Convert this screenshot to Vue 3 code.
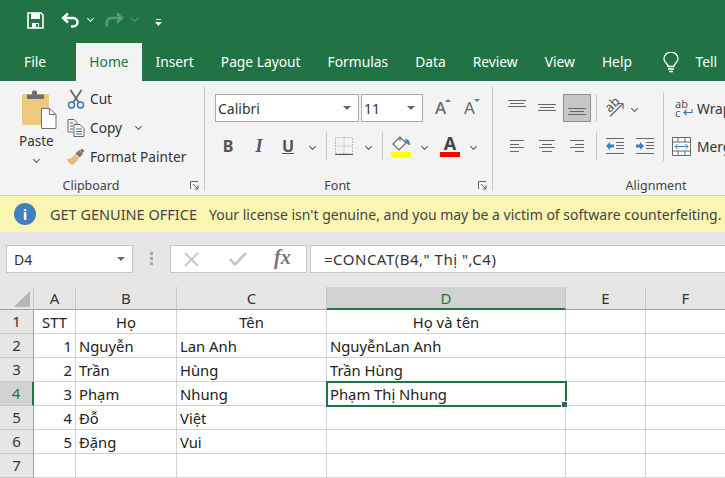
<script setup>
const tabs = ['File', 'Home', 'Insert', 'Page Layout', 'Formulas', 'Data', 'Review', 'View', 'Help']
const columns = ['A', 'B', 'C', 'D', 'E', 'F']

// Cada fila: numero, STT, Ho, Ten, Ho va ten
const rows = [
  { n: 1, a: 'STT', b: 'Họ', c: 'Tên', d: 'Họ và tên', header: true },
  { n: 2, a: '1', b: 'Nguyễn', c: 'Lan Anh', d: 'NguyễnLan Anh' },
  { n: 3, a: '2', b: 'Trần', c: 'Hùng', d: 'Trần Hùng' },
  { n: 4, a: '3', b: 'Phạm', c: 'Nhung', d: 'Phạm Thị Nhung', active: true },
  { n: 5, a: '4', b: 'Đỗ', c: 'Việt', d: '' },
  { n: 6, a: '5', b: 'Đặng', c: 'Vui', d: '' },
  { n: 7, a: '', b: '', c: '', d: '' }
]
</script>

<template>
  <div class="excel">
    <div class="titlebar">
      <svg class="qat-save" width="17" height="17" viewBox="0 0 17 17">
        <path d="M1 1h13l2 2v13H1z" fill="none" stroke="#fff" stroke-width="1.6" />
        <path d="M4 1h9v6H4z" fill="#fff" />
        <path d="M5 11h7v5H5z" fill="#fff" />
        <path d="M9 12h2v3H9z" fill="#217346" />
      </svg>
      <svg class="qat-undo" width="19" height="16" viewBox="0 0 19 16">
        <path d="M7 1.500 2 6l5 4.500M2.500 6H12c6 0 6 8.500 0 8.500H10" fill="none" stroke="#fff" stroke-width="2.400" />
      </svg>
      <span class="chev white qat-chev"></span>
      <svg class="qat-redo" width="19" height="16" viewBox="0 0 19 16">
        <path d="M12 1.500 17 6l-5 4.500M16.500 6H7c-5 0-6 3.500-5 8.500" fill="none" stroke="#5c9c7c" stroke-width="2.400" />
      </svg>
      <span class="chev dim qat-chev2"></span>
      <svg class="qat-more" width="7" height="9" viewBox="0 0 7 9">
        <path d="M1 1h5v1H1z" fill="#fff" />
        <path d="M0 4h7L3.500 8z" fill="#fff" />
      </svg>
    </div>

    <div class="tabs">
      <span v-for="t in tabs" :key="t" class="tab" :class="{ on: t === 'Home', first: t === 'File' }">{{ t }}</span>
      <svg class="bulb" width="16" height="21" viewBox="0 0 16 21">
        <path d="M5 14.500c0-3-4-4-4-7.500a7 7 0 0 1 14 0c0 3.500-4 4.500-4 7.500z" fill="none" stroke="#fff" stroke-width="1.300" />
        <path d="M5 17h6M6 19.500h4" stroke="#fff" stroke-width="1.300" />
      </svg>
      <span class="tab tell">Tell</span>
    </div>

    <div class="ribbon">
      <section class="group clipboard">
        <div class="group-body clip-body">
          <div class="paste">
            <svg width="35" height="39" viewBox="0 0 35 39">
              <rect x="0" y="4" width="27" height="31" rx="2" fill="#edc87e" />
              <path d="M5 9V4.500h5V2a1.500 1.500 0 0 1 1.500-1.500h2A1.500 1.500 0 0 1 15 2v2.500h7V9z" fill="#6f6f6f" />
              <path d="M19.500 18.500h8l6.500 6V38.500H19.500z" fill="#fff" stroke="#6f6f6f" />
              <path d="M27.500 18.500v6H34" fill="none" stroke="#6f6f6f" />
            </svg>
            <span class="paste-label">Paste</span>
            <span class="chev"></span>
          </div>
          <div class="tools">
            <div class="tool">
              <svg width="17" height="20" viewBox="0 0 17 20">
                <path d="M3 1l8 12M14 1 6 13" stroke="#666" stroke-width="1.800" fill="none" />
                <circle cx="4" cy="16" r="3" fill="none" stroke="#2f74b8" stroke-width="1.400" />
                <circle cx="13" cy="16" r="3" fill="none" stroke="#2f74b8" stroke-width="1.400" />
              </svg>
              <span>Cut</span>
            </div>
            <div class="tool">
              <svg width="17" height="18" viewBox="0 0 17 18">
                <path d="M.5.500h6l3 3v3M.5.500V13h5" fill="none" stroke="#666" />
                <path d="M6.500 5.500h6l4 4v8h-10z" fill="#fff" stroke="#666" />
                <path d="M2.500 4h3M2.500 7h3M2.500 10h3" stroke="#666" />
                <path d="M8.500 10h6M8.500 12.500h6M8.500 15h6" stroke="#2f74b8" />
              </svg>
              <span>Copy</span>
              <span class="chev copy-chev"></span>
            </div>
            <div class="tool">
              <svg width="18" height="17" viewBox="0 0 18 17">
                <path d="M0 11c3 0 6-2 8-5l4 4c-2 3-4 6-7 7-2-.500-4-3-5-6z" fill="#e6bd76" />
                <path d="M8.500 5.500 12 2l4 4-3.500 3.500z" fill="#777" />
                <path d="M13 2.500 15 .500l2.500 2.500-2 2z" fill="#777" />
              </svg>
              <span>Format Painter</span>
            </div>
          </div>
        </div>
        <div class="group-label">
          Clipboard
          <svg class="launcher" width="9" height="9" viewBox="0 0 9 9">
            <path d="M.5 8V.5H8M3 3l5 5M8 4.500V8H4.500" fill="none" stroke="#666" />
          </svg>
        </div>
      </section>

      <section class="group font">
        <div class="group-body">
          <div class="font-row first-row">
            <div class="select name"><span>Calibri</span><i class="caret"></i></div>
            <div class="select size"><span>11</span><i class="caret"></i></div>
            <span class="btn grow">A<i class="mark up"></i></span>
            <span class="btn shrink">A<i class="mark down"></i></span>
          </div>
          <div class="font-row second-row">
            <span class="fmt w26 bold">B</span>
            <span class="fmt w28 ital">I</span>
            <span class="fmt w30 under">U</span>
            <span class="chev-box"><span class="chev"></span></span>
            <span class="sep"></span>
            <span class="fmt w26">
              <svg width="18" height="18" viewBox="0 0 18 18">
                <path d="M.5.500h17v16H.5zM9 .500v16M.5 9h17" fill="none" stroke="#888" stroke-dasharray="1 2" />
                <path d="M0 17.500h18" stroke="#555" />
              </svg>
            </span>
            <span class="chev-box gap2"><span class="chev"></span></span>
            <span class="sep"></span>
            <span class="fmt w28 color-btn">
              <svg width="20" height="15" viewBox="0 0 20 15">
                <path d="M9 1 2 8l6 6 7-7z" fill="#fff" stroke="#666" stroke-width="1.200" />
                <path d="M9 1V5" stroke="#666" stroke-width="1.200" />
                <path d="M14 3c3 0 5 2 5 6-2 0-3-1-4-3z" fill="#3f7fbd" />
              </svg>
              <i class="bar yellow"></i>
            </span>
            <span class="chev-box"><span class="chev"></span></span>
            <span class="fmt w28 color-btn letter">
              <b>A</b>
              <i class="bar red"></i>
            </span>
            <span class="chev-box"><span class="chev"></span></span>
          </div>
        </div>
        <div class="group-label">
          Font
          <svg class="launcher" width="9" height="9" viewBox="0 0 9 9">
            <path d="M.5 8V.5H8M3 3l5 5M8 4.500V8H4.500" fill="none" stroke="#666" />
          </svg>
        </div>
      </section>

      <section class="group alignment">
        <div class="group-body">
          <div class="font-row first-row">
            <span class="align"><svg width="18" height="18" viewBox="0 0 18 18"><path d="M0 1.500h18M2 4.500h14M0 7.500h18" stroke="#666" /></svg></span>
            <span class="align"><svg width="18" height="18" viewBox="0 0 18 18"><path d="M0 5.500h18M2 8.500h14M0 11.500h18" stroke="#666" /></svg></span>
            <span class="align selected"><svg width="18" height="18" viewBox="0 0 18 18"><path d="M0 9.500h18M2 12.500h14M0 15.500h18" stroke="#666" /></svg></span>
            <span class="sep tall"></span>
            <span class="orient">
              <span class="orient-text">ab</span>
              <svg width="20" height="20" viewBox="0 0 20 20">
                <path d="M6 18.500 18.500 6M13.500 5.500h5.500V11" fill="none" stroke="#666" stroke-width="1.200" />
              </svg>
            </span>
            <span class="chev-box"><span class="chev"></span></span>
            <span class="sep long"></span>
            <span class="wrap-icon">
              <span class="wrap-letters">ab<br />c</span>
              <svg class="wrap-arrow" width="10" height="8" viewBox="0 0 10 8">
                <path d="M9 0v3.500H1.500M3.500 1 1 3.500 3.500 6" fill="none" stroke="#2f74b8" stroke-width="1.100" />
              </svg>
            </span>
            <span class="wrap-text">Wrap Text</span>
          </div>
          <div class="font-row second-row">
            <span class="align"><svg width="18" height="16" viewBox="0 0 18 16"><path d="M2 2.500h14M2 6.500h9M2 9.500h14M2 13.500h9" stroke="#666" /></svg></span>
            <span class="align"><svg width="18" height="16" viewBox="0 0 18 16"><path d="M1 2.500h16M4 6.500h10M1 9.500h16M4 13.500h10" stroke="#666" /></svg></span>
            <span class="align"><svg width="18" height="16" viewBox="0 0 18 16"><path d="M2 2.500h14M7 6.500h9M2 9.500h14M7 13.500h9" stroke="#666" /></svg></span>
            <span class="sep tall"></span>
            <span class="indent">
              <svg width="18" height="16" viewBox="0 0 18 16">
                <path d="M0 .500h18M10 4.500h8M10 7.500h8M10 10.500h8M0 15.500h18" stroke="#666" />
                <path d="M0 8l4-4v2.500h4v3H4V12z" fill="#3f7fbd" />
              </svg>
            </span>
            <span class="indent">
              <svg width="18" height="16" viewBox="0 0 18 16">
                <path d="M0 .500h18M10 4.500h8M10 7.500h8M10 10.500h8M0 15.500h18" stroke="#666" />
                <path d="M8 8 4 4v2.500H0v3h4V12z" fill="#3f7fbd" />
              </svg>
            </span>
            <span class="merge-icon">
              <svg width="19" height="19" viewBox="0 0 19 19">
                <path d="M.5.500h18v18H.5zM.5 5h18M.5 14h18M6 .500V5M13 .500V5M6 14v4.500M13 14v4.500" fill="#fff" stroke="#666" />
                <path d="M3 9.500h13M5.500 7 3 9.500 5.500 12M13.500 7 16 9.500 13.500 12" fill="none" stroke="#3f7fbd" />
              </svg>
            </span>
            <span class="wrap-text">Merge &amp; Center</span>
          </div>
        </div>
        <div class="group-label">Alignment</div>
      </section>
    </div>

    <div class="notice">
      <span class="info">i</span>
      <strong>GET GENUINE OFFICE</strong>
      <span>Your license isn't genuine, and you may be a victim of software counterfeiting.</span>
    </div>

    <div class="formula-area">
      <div class="namebox"><span>D4</span><i class="caret"></i></div>
      <i class="grip"></i>
      <div class="fx-box">
        <svg class="fx-x" width="15" height="15" viewBox="0 0 15 15">
          <path d="M1 1l13 13M14 1 1 14" stroke="#c4c4c4" stroke-width="1.800" />
        </svg>
        <svg class="fx-ok" width="18" height="14" viewBox="0 0 18 14">
          <path d="M1 7l5 5.500L17 1" fill="none" stroke="#c4c4c4" stroke-width="2.600" />
        </svg>
        <span class="fx">fx</span>
      </div>
      <div class="formula">=CONCAT(B4," Thị ",C4)</div>
    </div>

    <div class="sheet">
      <div class="head corner"><i></i></div>
      <div v-for="c in columns" :key="c" class="head" :class="{ picked: c === 'D' }">{{ c }}</div>

      <template v-for="r in rows" :key="r.n">
        <div class="rowhead" :class="{ picked: r.active }">{{ r.n }}</div>
        <div class="cell num" :class="{ mid: r.header }">{{ r.a }}</div>
        <div class="cell" :class="{ mid: r.header }">{{ r.b }}</div>
        <div class="cell" :class="{ mid: r.header }">{{ r.c }}</div>
        <div class="cell" :class="{ mid: r.header, active: r.active }">
          {{ r.d }}
          <i v-if="r.active" class="handle"></i>
        </div>
        <div class="cell"></div>
        <div class="cell"></div>
      </template>
    </div>
  </div>
</template>

<style scoped>
.excel {
  width: 725px;
  height: 478px;
  overflow: hidden;
  background: #e6e6e6;
  font-family: "Noto Sans", "Open Sans", sans-serif;
  color: #333;
}

.titlebar {
  height: 43px;
  background: #217346;
  display: flex;
  align-items: center;
  padding-left: 27px;
}
.qat-save { margin-top: -3px; }
.qat-undo { margin: -3px 0 0 17px; }
.qat-chev { margin: -6px 0 0 8px; }
.qat-redo { margin: -3px 0 0 12px; }
.qat-chev2 { margin: -6px 0 0 8px; }
.qat-more { margin: 1px 0 0 18px; }

.tabs {
  height: 38px;
  background: #217346;
  display: flex;
  white-space: nowrap;
  overflow: hidden;
}
.tab {
  flex: none;
  padding: 0 13.500px;
  line-height: 38px;
  font-size: 13.800px;
  color: #fff;
}
.tab.first { padding: 0 0 0 24px; width: 76px; box-sizing: border-box; }
.tab.on {
  background: #f3f3f3;
  color: #217346;
  width: 66px;
  box-sizing: border-box;
  padding: 0;
  text-align: center;
}
.bulb { margin: 9px 0 0 18px; flex: none; }
.tab.tell { padding: 0 0 0 16px; }

.ribbon {
  height: 114px;
  background: #f3f3f3;
  border-bottom: 1px solid #d0d0d0;
  display: flex;
  overflow: hidden;
}
.group {
  flex: none;
  display: flex;
  flex-direction: column;
  margin-top: 5px;
  height: 104px;
  position: relative;
}
.clipboard { width: 204px; border-right: 1px solid #c6c6c6; }
.font { width: 287px; border-right: 1px solid #c6c6c6; }
.alignment { width: 326px; }
.group-body { flex: 1; min-height: 0; }
.group-label {
  height: 18px;
  line-height: 18px;
  text-align: center;
  font-size: 12.500px;
  color: #444;
  margin-bottom: -5px;
  margin-top: -7px;
}
.clipboard .group-label, .font .group-label { padding-right: 22px; }
.launcher { position: absolute; right: 5px; bottom: 0; }

.clip-body { display: flex; }
.paste {
  width: 72px;
  padding: 4px 0 0 22px;
  box-sizing: border-box;
  display: flex;
  flex-direction: column;
  align-items: flex-start;
}
.paste-label { margin-left: -3px; display: block; font-size: 13.500px; margin-top: 3px; line-height: 18px; white-space: nowrap; }
.paste .chev { margin: 7px 0 0 12px; }
.tools { margin: -2px 0 0 -5px; }
.tool {
  height: 29px;
  display: flex;
  align-items: center;
  font-size: 13.700px;
  white-space: nowrap;
}
.tool svg { width: 18px; margin-right: 5px; flex: none; }
.copy-chev { margin: -3px 0 0 14px; }

.chev {
  display: inline-block;
  width: 4px;
  height: 4px;
  border-right: 1px solid #555;
  border-bottom: 1px solid #555;
  transform: rotate(45deg);
}
.chev.white { border-color: #fff; }
.chev.dim { border-color: #5c9c7c; }
.chev-box {
  width: 18px;
  height: 100%;
  display: flex;
  align-items: center;
  justify-content: center;
  flex: none;
}
.chev-box.gap2 { margin-left: 2px; }

.font-row { display: flex; box-sizing: border-box; }
.first-row { height: 28px; margin-top: 8px; padding-left: 10px; }
.second-row { height: 28px; margin-top: 10px; padding-left: 10px; align-items: center; }
.select {
  background: #fff;
  border: 1px solid #ababab;
  box-sizing: border-box;
  height: 28px;
  display: flex;
  align-items: center;
  justify-content: space-between;
  padding: 0 7px 0 2px;
  font-size: 14px;
  flex: none;
}
.select.name { width: 144px; }
.select.size { width: 62px; margin-left: 2px; }
.caret {
  width: 0;
  height: 0;
  border: 4px solid transparent;
  border-top: 4px solid #666;
  border-bottom: 0;
}
.btn {
  width: 29px;
  flex: none;
  text-align: center;
  font-size: 17px;
  line-height: 28px;
  color: #666;
  position: relative;
}
.btn.grow { margin-left: 3px; font-weight: 500; }
.mark { position: absolute; top: 5px; right: 4px; border: 3px solid transparent; }
.mark.up { border-top: 0; border-bottom: 3px solid #3f7fbd; }
.mark.down { border-bottom: 0; border-top: 3px solid #3f7fbd; }

.fmt {
  flex: none;
  text-align: center;
  font-size: 16px;
  color: #555;
  height: 28px;
  line-height: 28px;
  display: flex;
  align-items: center;
  justify-content: center;
}
.w26 { width: 26px; }
.w28 { width: 28px; }
.w30 { width: 30px; }
.bold { font-weight: 700; margin-right: 4px; }
.ital { font-style: italic; font-weight: 700; font-family: "Liberation Serif", serif; font-size: 18px; }
.under { font-weight: 700; text-decoration: underline; }
.sep {
  width: 1px;
  height: 28px;
  background: #c6c6c6;
  margin: 0 4px 0 5px;
  flex: none;
}
.color-btn { flex-direction: column; justify-content: flex-start; padding-top: 4px; box-sizing: border-box; }
.color-btn svg { display: block; }
.color-btn b { font-size: 18px; line-height: 15px; color: #444; display: block; height: 15px; }
.bar { display: block; width: 20px; height: 5px; margin-top: 1px; }
.bar.yellow { background: #ffff00; }
.bar.red { background: #ff0000; }
.letter { margin-left: 3px; }

.alignment .first-row, .alignment .second-row { padding-left: 9px; position: relative; align-items: center; }
.align {
  width: 30px;
  height: 28px;
  flex: none;
  display: flex;
  align-items: center;
  justify-content: center;
  box-sizing: border-box;
}
.align.selected { background: #c6c6c6; border: 1px solid #8f8f8f; width: 28px; margin: 0 1px; }
.sep.tall { margin: 0 3px 0 4px; height: 28px; }
.orient, .indent {
  flex: none;
  width: 28px;
  display: flex;
  justify-content: center;
}
.orient { position: relative; }
.orient-text {
  position: absolute;
  left: 4px;
  top: -2px;
  font-size: 13px;
  line-height: 16px;
  color: #555;
  transform: rotate(-45deg);
}
.indent { width: 30px; }
.orient + .chev-box { width: 12px; }
.sep.long { position: absolute; left: 170px; top: -2px; height: 69px; margin: 0; }
.wrap-icon { margin-left: 35px; flex: none; display: flex; position: relative; width: 18px; height: 18px; }
.wrap-letters { font-size: 11px; line-height: 9px; color: #555; }
.wrap-arrow { position: absolute; left: 8px; top: 10px; }
.wrap-text { font-size: 13.800px; margin-left: 4px; white-space: nowrap; }
.merge-icon { margin-left: 12px; flex: none; display: flex; }
.merge-icon + .wrap-text { margin-left: 6px; }

.notice {
  height: 36px;
  background: #fbf5b4;
  display: flex;
  align-items: center;
  padding-left: 14px;
  font-size: 14px;
  color: #444;
  white-space: nowrap;
  overflow: hidden;
}
.notice strong { font-weight: 400; font-size: 14.500px; margin-right: 12px; }
.info {
  width: 22px;
  height: 22px;
  border-radius: 50%;
  background: #3f7fbd;
  color: #fff;
  text-align: center;
  line-height: 22px;
  font-size: 15px;
  font-weight: 700;
  margin-right: 14px;
  flex: none;
}

.formula-area {
  height: 55px;
  box-sizing: border-box;
  padding: 13px 0 14px 6px;
  display: flex;
  background: #e6e6e6;
}
.namebox, .fx-box, .formula {
  background: #fff;
  border: 1px solid #c6c6c6;
  box-sizing: border-box;
  height: 28px;
  flex: none;
  display: flex;
  align-items: center;
  font-size: 14px;
}
.namebox { width: 127px; justify-content: space-between; padding: 0 7px; }
.grip {
  width: 3px;
  height: 14px;
  margin: 7px 17px 0 17px;
  background: repeating-linear-gradient(#a8a8a8 0 3px, transparent 3px 5px);
  flex: none;
}
.fx-box { width: 137px; padding-left: 13px; }
.fx-ok { margin-left: 30px; }
.fx {
  font-family: "Liberation Serif", serif;
  font-style: italic;
  font-weight: 700;
  font-size: 20px;
  color: #777;
  margin: -3px 0 0 27px;
}
.formula { width: 420px; margin-left: 3px; padding-left: 13px; color: #333; font-size: 15px; letter-spacing: .5px; }

.sheet {
  display: grid;
  grid-template-columns: 34px 42px 101px 150px 239px 80px 80px;
  grid-template-rows: 23px repeat(7, 24px);
  background: #fff;
  font-size: 14.800px;
  color: #222;
}
.head {
  background: #e6e6e6;
  border-right: 1px solid #c6c6c6;
  border-bottom: 1px solid #9f9f9f;
  text-align: center;
  line-height: 22px;
  font-size: 15px;
  color: #333;
  box-sizing: border-box;
}
.corner { position: relative; }
.corner i {
  position: absolute;
  right: 3px;
  bottom: 2px;
  width: 0;
  height: 0;
  border-left: 16px solid transparent;
  border-bottom: 16px solid #b6b6b6;
}
.head.picked {
  background: #d2d2d2;
  color: #217346;
  border-bottom: 2px solid #217346;
}
.rowhead {
  background: #e6e6e6;
  border-right: 1px solid #9f9f9f;
  border-bottom: 1px solid #c6c6c6;
  text-align: center;
  line-height: 23px;
  font-size: 15px;
  color: #333;
  box-sizing: border-box;
}
.rowhead.picked {
  background: #d2d2d2;
  color: #217346;
  border-right: 2px solid #217346;
}
.cell {
  border-right: 1px solid #d4d4d4;
  border-bottom: 1px solid #d4d4d4;
  box-sizing: border-box;
  padding: 0 3px;
  line-height: 24px;
  white-space: nowrap;
  position: relative;
}
.cell.num { text-align: right; }
.cell.mid { text-align: center; }
.cell.active {
  outline: 2px solid #217346;
  outline-offset: -1px;
  z-index: 1;
}
.handle {
  position: absolute;
  right: -3px;
  bottom: -3px;
  width: 5px;
  height: 5px;
  background: #217346;
  border: 1px solid #fff;
}
</style>
